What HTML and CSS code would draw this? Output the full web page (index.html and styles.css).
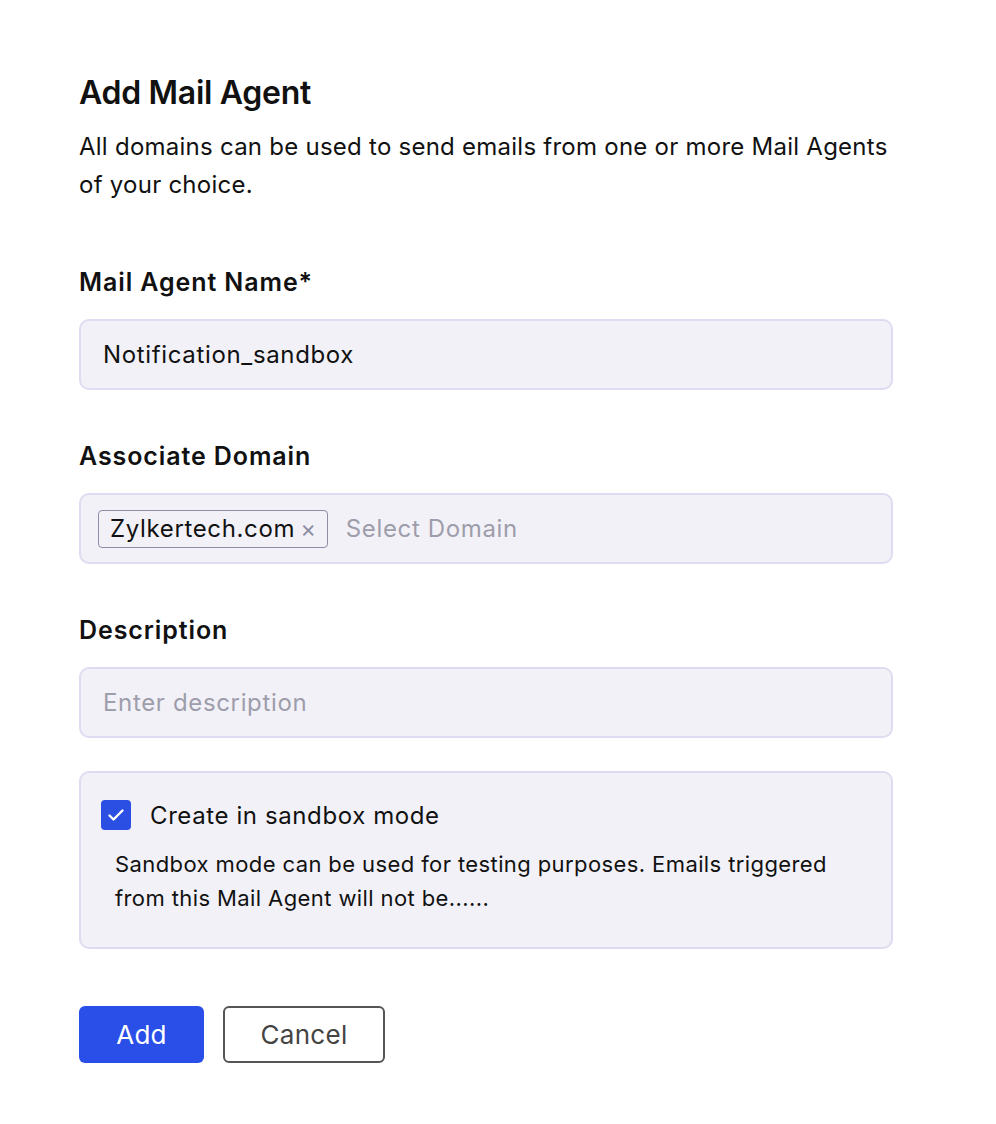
FILE: index.html
```html
<!DOCTYPE html>
<html lang="en">
<head>
    <meta charset="UTF-8">
    <meta name="viewport" content="width=device-width, initial-scale=1.0">
    <title>Add Mail Agent</title>
    <link rel="stylesheet" href="styles.css">
</head>
<body>
    <div class="form-wrap">
        <h1>Add Mail Agent</h1>
        <p class="intro">All domains can be used to send emails from one or more Mail Agents of your choice.</p>

        <div class="field">
            <label class="field-label">Mail Agent Name*</label>
            <div class="input-box">Notification_sandbox</div>
        </div>

        <div class="field">
            <label class="field-label">Associate Domain</label>
            <div class="input-box tag-box">
                <span class="tag">Zylkertech.com <span class="tag-x">&times;</span></span>
                <span class="placeholder">Select Domain</span>
            </div>
        </div>

        <div class="field">
            <label class="field-label">Description</label>
            <div class="input-box placeholder">Enter description</div>
        </div>

        <div class="sandbox">
            <div class="check-row">
                <span class="checkbox">
                    <svg width="20" height="20" viewBox="0 0 20 20"><path d="M3.5 10.5l4 4 9-9" fill="none" stroke="#fff" stroke-width="2.4" stroke-linecap="round" stroke-linejoin="round"/></svg>
                </span>
                <span class="check-label">Create in sandbox mode</span>
            </div>
            <p class="sandbox-note">Sandbox mode can be used for testing purposes. Emails triggered from this Mail Agent will not be......</p>
        </div>

        <div class="actions">
            <button class="btn btn-primary">Add</button>
            <button class="btn btn-outline">Cancel</button>
        </div>
    </div>
</body>
</html>
```

FILE: styles.css
```css
body {
    margin: 0;
    background-color: #fff;
    font-family: Inter, "Open Sans", sans-serif;
    color: #111;
}
.form-wrap {
    width: 814px;
    padding: 73px 0 0 79px;
}
h1 {
    margin: 0;
    font-size: 32px;
    line-height: 40px;
    font-weight: 600;
    letter-spacing: -0.3px;
}
.intro {
    margin: 15px 0 0;
    font-size: 24px;
    line-height: 38px;
    letter-spacing: 0.25px;
}
.field {
    margin-top: 63px;
}
.field + .field {
    margin-top: 51px;
}
.field-label {
    display: block;
    font-size: 25px;
    line-height: 30px;
    font-weight: 600;
    letter-spacing: 0.9px;
    margin-bottom: 22px;
}
.input-box {
    box-sizing: border-box;
    height: 71px;
    display: flex;
    align-items: center;
    padding: 0 22px;
    background-color: #f2f1f7;
    border: 2px solid #dedcf0;
    border-radius: 10px;
    font-size: 24px;
    letter-spacing: 0.65px;
}
.placeholder {
    color: #9e9dab;
}
.tag-box {
    padding-left: 17px;
    gap: 18px;
}
.tag {
    display: flex;
    align-items: center;
    height: 38px;
    box-sizing: border-box;
    padding: 0 10px 0 11px;
    border: 1.5px solid #8e8da6;
    border-radius: 4px;
    color: #111;
}
.tag-x {
    color: #8e8da6;
    font-size: 24px;
    margin-left: 5px;
}
.sandbox {
    box-sizing: border-box;
    margin-top: 33px;
    height: 178px;
    padding: 27px 20px 0;
    background-color: #f2f1f7;
    border: 2px solid #dedcf0;
    border-radius: 10px;
}
.check-row {
    display: flex;
    align-items: center;
    gap: 19px;
}
.checkbox {
    width: 30px;
    height: 30px;
    border-radius: 4px;
    background-color: #2b4ee3;
    display: flex;
    align-items: center;
    justify-content: center;
}
.check-label {
    font-size: 24px;
    letter-spacing: 0.6px;
}
.sandbox-note {
    margin: 17px 0 0 14px;
    font-size: 22px;
    line-height: 34px;
    letter-spacing: 0.4px;
    padding-right: 20px;
}
.actions {
    display: flex;
    gap: 19px;
    margin-top: 57px;
}
.btn {
    height: 57px;
    border-radius: 6px;
    font-family: Inter, "Open Sans", sans-serif;
    font-size: 26px;
    letter-spacing: 0.3px;
    cursor: pointer;
}
.btn-primary {
    width: 125px;
    background-color: #2a4ee8;
    color: #fff;
    border: none;
}
.btn-outline {
    width: 162px;
    background-color: #fff;
    color: #444;
    border: 2px solid #555;
}
```
